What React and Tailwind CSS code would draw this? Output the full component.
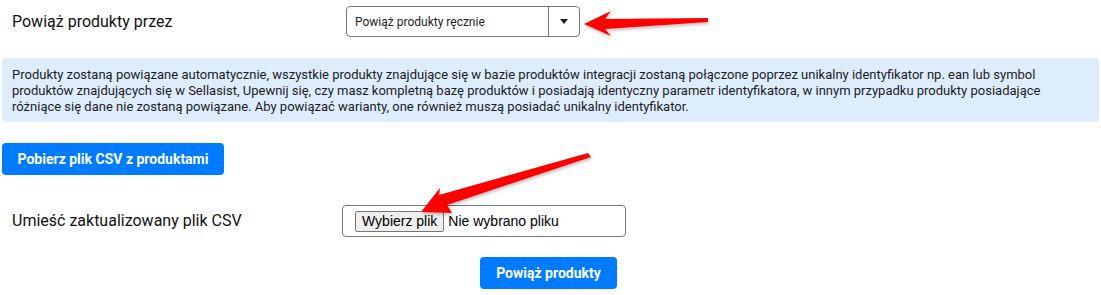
import React from "react";

// Red annotation arrow drawn as a filled shape
const Arrow = ({ className, points }) => (
  <svg className={className} width="1101" height="295" viewBox="0 0 1101 295">
    <defs>
      <filter id="shadow" x="-10%" y="-50%" width="120%" height="200%">
        <feDropShadow dx="1" dy="2" stdDeviation="1.5" floodColor="#000" floodOpacity="0.25" />
      </filter>
    </defs>
    <polygon points={points} fill="#ff0000" filter="url(#shadow)" />
  </svg>
);

const App = () => {
  return (
    <div className="relative w-[1101px] h-[295px] bg-white font-['Roboto',sans-serif] text-[#212529] overflow-hidden">
      <div className="flex flex-col px-[2px] pt-[6px]">
        {/* Powiąż produkty przez */}
        <div className="flex items-center h-[31px]">
          <div className="w-[344px] pl-[10px] text-[16px] text-[#111]">Powiąż produkty przez</div>
          <div className="flex items-stretch w-[234px] h-[31px] border border-[#777] rounded-[4px]">
            <div className="flex-1 flex items-center pl-[8px] text-[12px] text-[#222]">
              Powiąż produkty ręcznie
            </div>
            <div className="w-[31px] border-l border-[#777] flex items-center justify-center">
              <svg width="8" height="5" viewBox="0 0 8 5">
                <polygon points="0,0 8,0 4,5" fill="#222" />
              </svg>
            </div>
          </div>
        </div>

        {/* Info box */}
        <div className="mt-[21px] h-[64px] bg-[#deedfd] rounded-[4px] pl-[10px] pr-[10px] pt-[9px] text-[13px] leading-[16px] text-[#1c1c1c]">
          Produkty zostaną powiązane automatycznie, wszystkie produkty znajdujące się w bazie produktów integracji zostaną połączone poprzez unikalny identyfikator np. ean lub symbol
          <br />
          produktów znajdujących się w Sellasist, Upewnij się, czy masz kompletną bazę produktów i posiadają identyczny parametr identyfikatora, w innym przypadku produkty posiadające
          <br />
          różniące się dane nie zostaną powiązane. Aby powiązać warianty, one również muszą posiadać unikalny identyfikator.
        </div>

        {/* Download button */}
        <div className="mt-[21px]">
          <button className="w-[222px] h-[32px] bg-[#007bff] rounded-[4px] text-white text-[14px] font-bold">
            Pobierz plik CSV z produktami
          </button>
        </div>

        {/* Upload row */}
        <div className="flex items-center h-[32px] mt-[30px]">
          <div className="w-[340px] pl-[10px] text-[16px] text-[#111]">Umieść zaktualizowany plik CSV</div>
          <div className="flex items-center w-[284px] h-[32px] border border-[#777] rounded-[4px] pl-[12px] font-['Liberation_Sans',Arial,sans-serif] text-[14px] text-black">
            <span className="h-[21px] px-[6px] flex items-center bg-[#efefef] border border-[#767676] rounded-[2px]">
              Wybierz plik
            </span>
            <span className="ml-[4px]">Nie wybrano pliku</span>
          </div>
        </div>

        {/* Submit button */}
        <div className="flex mt-[20px] pl-[478px]">
          <button className="w-[137px] h-[32px] bg-[#007bff] rounded-[4px] text-white text-[14px] font-bold">
            Powiąż produkty
          </button>
        </div>
      </div>

      {/* Annotation arrows */}
      <Arrow
        className="absolute left-0 top-0 pointer-events-none"
        points="584,24 611,11 605,19 708,18 708,22 605,29 611,36"
      />
      <Arrow
        className="absolute left-0 top-0 pointer-events-none"
        points="421,212 440,188 439,195 588,153 591,157 447,205 452,213"
      />
    </div>
  );
};

export default App;
